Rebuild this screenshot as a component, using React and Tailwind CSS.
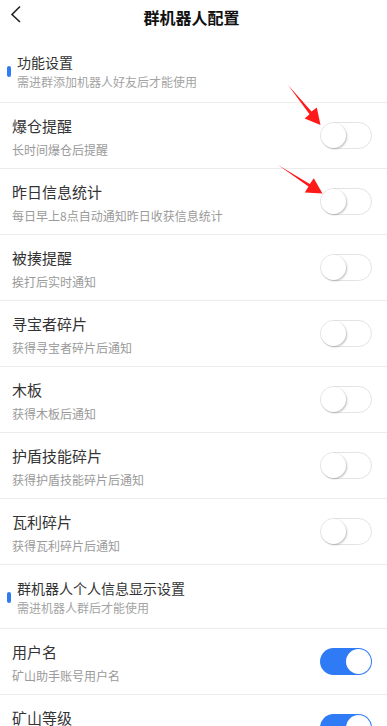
import React from "react";

const font = { fontFamily: '"Noto Sans CJK SC", "Noto Sans", sans-serif' };

function Toggle({ on }) {
  if (on) {
    return (
      <div className="w-[52px] h-[27px] rounded-full bg-[#2f7bf6] flex items-center justify-end pr-[1px] shrink-0">
        <div className="w-[25px] h-[25px] rounded-full bg-white"></div>
      </div>
    );
  }
  return (
    <div className="w-[52px] h-[27px] rounded-full bg-white border border-[#e3e3e3] flex items-center shrink-0">
      <div className="w-[25px] h-[25px] rounded-full bg-white shadow-[1px_1px_2px_rgba(0,0,0,0.25)]"></div>
    </div>
  );
}

function Row({ title, sub, on }) {
  return (
    <div className="h-[66px] border-b border-[#ececec] flex items-center pl-3 pr-[15px]">
      <div className="flex-1 flex flex-col pt-[3px]">
        <div className="text-[15px] leading-[22px] text-[#333]">{title}</div>
        <div className="text-[12px] leading-[18px] text-[#9a9a9a] mt-1">{sub}</div>
      </div>
      <Toggle on={on} />
    </div>
  );
}

function Section({ title, sub }) {
  return (
    <div className="h-[64px] border-b border-[#ececec] flex items-center pl-[7px]">
      <div className="w-[4px] h-[11px] rounded-full bg-[#2f7bf6] mt-[1px]"></div>
      <div className="flex flex-col ml-[6px]">
        <div className="text-[14px] leading-[22px] text-[#333]">{title}</div>
        <div className="text-[12px] leading-[18px] text-[#a3a3a3]">{sub}</div>
      </div>
    </div>
  );
}

export default function App() {
  return (
    <div className="relative w-[387px] h-[726px] overflow-hidden bg-white" style={font}>
      <div className="h-[39px] relative flex items-center justify-center">
        <svg className="absolute left-[9px] top-[5px]" width="14" height="18" viewBox="0 0 14 18">
          <path d="M11 1.5 L3 9.5 L11 17" fill="none" stroke="#222" strokeWidth="1.6" />
        </svg>
        <div className="text-[16px] font-bold text-[#111] leading-[22px] -mt-[5px] -ml-[4px]">群机器人配置</div>
      </div>
      <Section title="功能设置" sub="需进群添加机器人好友后才能使用" />
      <Row title="爆仓提醒" sub="长时间爆仓后提醒" />
      <Row title="昨日信息统计" sub="每日早上8点自动通知昨日收获信息统计" />
      <Row title="被揍提醒" sub="挨打后实时通知" />
      <Row title="寻宝者碎片" sub="获得寻宝者碎片后通知" />
      <Row title="木板" sub="获得木板后通知" />
      <Row title="护盾技能碎片" sub="获得护盾技能碎片后通知" />
      <Row title="瓦利碎片" sub="获得瓦利碎片后通知" />
      <Section title="群机器人个人信息显示设置" sub="需进机器人群后才能使用" />
      <Row title="用户名" sub="矿山助手账号用户名" on />
      <Row title="矿山等级" sub="矿山等级" on />
      <svg className="absolute left-0 top-0 pointer-events-none" width="387" height="726" viewBox="0 0 387 726">
        <polygon points="288,85 311.5,111.5 316.8,107.6 320.5,125 304.6,118.4 309.5,114.2" fill="#ff1a1a" />
        <polygon points="278,165 309.8,184 313.8,178.3 322.5,193.5 304.8,192.4 308.5,186.5" fill="#ff1a1a" />
      </svg>
    </div>
  );
}
